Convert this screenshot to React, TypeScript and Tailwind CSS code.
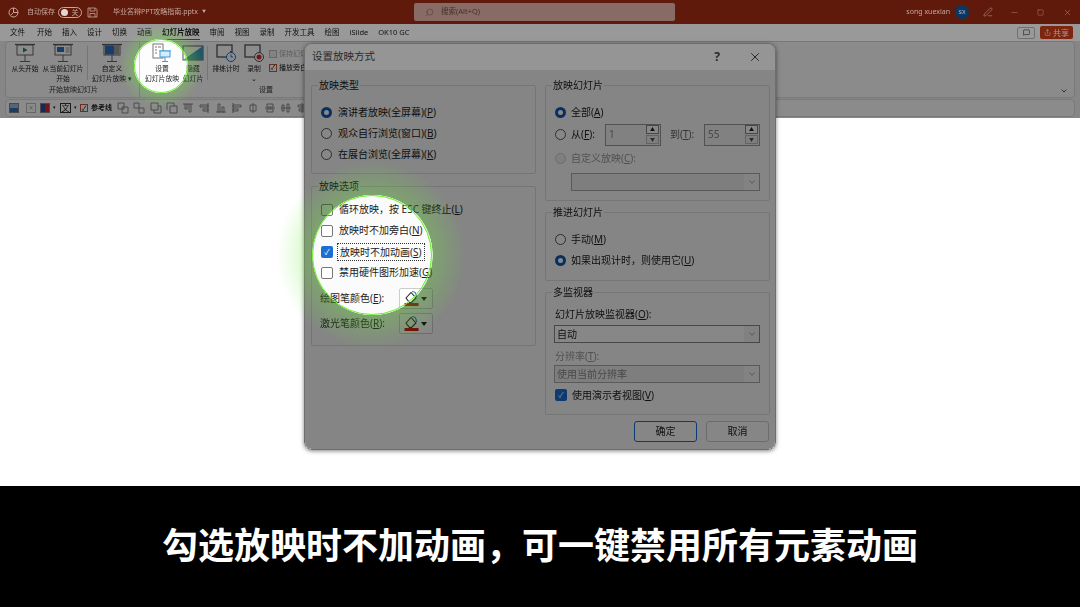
import React from "react";
import { ChevronDown, Minus, Square, X, Search, MessageSquare, Share, PenLine } from "lucide-react";

const Mn = ({ k }: { k: string }) => (
  <>
    (<u>{k}</u>)
  </>
);

const Screen = ({ children }: { children?: React.ReactNode }) => (
  <svg width="22" height="20" viewBox="0 0 22 20" fill="none">
    <path d="M1 1.5h20" stroke="#555" strokeWidth="1.2" />
    <rect x="3" y="2" width="16" height="10" fill="#fff" stroke="#666" />
    {children}
    <path d="M11 12v6M6 18.5h10" stroke="#666" />
  </svg>
);

const RibbonBtn = ({
  className,
  icon,
  lines,
}: {
  className: string;
  icon: React.ReactNode;
  lines: React.ReactNode[];
}) => (
  <div className={`flex flex-col items-center pt-[1px] text-[6.8px] leading-[9.5px] text-[#222] ${className}`}>
    <div className="flex h-[19px] items-center justify-center">{icon}</div>
    <div className="mt-[2px] whitespace-nowrap text-center">
      {lines.map((l, i) => (
        <div key={i}>{l}</div>
      ))}
    </div>
  </div>
);

const tabs = ["开始", "插入", "设计", "切换", "动画"];
const tabsAfter = ["审阅", "视图", "录制", "开发工具", "绘图", "iSlide", "OK10 GC"];

const TitleBar = () => (
  <div className="flex h-[24px] items-center bg-[#5f1a0b] text-[7px] text-[#c7a79d]">
    <div className="flex w-[414px] items-center">
      <svg className="ml-[8px]" width="11" height="11" viewBox="0 0 11 11" fill="none">
        <circle cx="5.5" cy="5.5" r="4.5" stroke="#c7a79d" />
        <path d="M5.5 1v4.5H10M3 8l2.5-2.5" stroke="#c7a79d" />
      </svg>
      <span className="ml-[8px]">自动保存</span>
      <div className="ml-[3px] flex h-[11px] w-[24px] items-center justify-between rounded-full border border-[#c7a79d] px-[1.5px]">
        <span className="h-[7px] w-[7px] rounded-full bg-[#e6d5d0]" />
        <span className="pr-[1px] text-[7px] leading-none">关</span>
      </div>
      <svg className="ml-[5px]" width="11" height="11" viewBox="0 0 11 11" fill="none">
        <path d="M1 1h7.5L10 2.5V10H1zM3 1v3h5V1M3 10V6.5h5V10" stroke="#c7a79d" strokeWidth="0.8" />
      </svg>
      <span className="ml-[15px]">毕业答辩PPT攻略指南.pptx</span>
      <span className="ml-[4px] text-[4px]">▼</span>
    </div>
    <div className="flex h-[18px] w-[261px] items-center rounded-[2px] bg-[#876b64] pl-[11px] text-[#43302a]">
      <Search size={9} className="-scale-x-100" strokeWidth={1.2} />
      <span className="ml-[7px] text-[7.5px]">搜索(Alt+Q)</span>
    </div>
    <div className="flex flex-1 items-center justify-end pr-[8px]">
      <span>song xuexian</span>
      <div className="ml-[5px] flex h-[14px] w-[14px] items-center justify-center rounded-full bg-[#0d3763] text-[6px] text-[#b6c4d3]">
        SX
      </div>
      <PenLine size={10} className="ml-[14px]" strokeWidth={1.2} />
      <Minus size={9} className="ml-[17px]" strokeWidth={1} />
      <Square size={7} className="ml-[18px]" strokeWidth={1.2} />
      <X size={9} className="ml-[19px]" strokeWidth={1.1} />
    </div>
  </div>
);

const TabRow = () => (
  <div className="relative flex h-[17px] items-center bg-white pl-[10px] text-[7.5px] text-[#222]">
    <div className="flex items-center gap-[10px]">
      <span className="mr-[2px]">文件</span>
      {tabs.map((t) => (
        <span key={t}>{t}</span>
      ))}
      <span className="relative font-bold text-[#111]">
        幻灯片放映
        <span className="absolute -bottom-[2px] left-0 right-0 h-[1.5px] bg-[#c43e1c]" />
      </span>
      {tabsAfter.map((t) => (
        <span key={t}>{t}</span>
      ))}
    </div>
    <div className="ml-auto mr-[7px] flex items-center gap-[5px]">
      <div className="flex h-[12px] w-[18px] items-center justify-center rounded-[2px] border border-[#bbb] bg-white">
        <MessageSquare size={7} />
      </div>
      <div className="flex h-[13px] w-[33px] items-center justify-center gap-[2px] rounded-[2px] bg-[#d33f1c] text-[8px] text-white">
        <Share size={7} />
        共享
      </div>
    </div>
    <div className="pointer-events-none absolute inset-0 bg-black/[.40] [mask-image:radial-gradient(circle_at_161px_42px,transparent_27px,black_27.5px)]" />
  </div>
);

const arrangePaths = [
  "M1 1h6v6H1zM5 5h6v6H5z",
  "M1 1h5v5H1zM6 6h5v5H6z",
  "M1 1h7v7H1zM8 4h3v7H4V8",
  "M4 4h7v7H4zM1 8V1h7v3",
  "M1 2h10M3 2v5h2V2M7 2v8h2V2",
  "M10 1v10M2 3h8v2H2zM5 7h5v2H5z",
  "M1 10h10M3 2h2v8H3zM7 5h2v5H7z",
  "M2 1v10M2 3h8v2H2zM2 7h5v2H2z",
  "M6 1v10M3 3h6v6H3z",
  "M1 6h10M3 2h6v3H3zM3 7h6v3H3z",
  "M1 6h10M2 3h2v6H2zM7 2h2v8H7z",
  "M6 1v10M2 3h8v2H2zM3 7h6v2H3z",
];

const Ribbon = () => (
  <div className="relative flex h-[77px] flex-col bg-[#f4f4f4] px-[5px] pb-[1px]">
    <div className="flex h-[57px] rounded-[4px] border border-[#ddd] bg-[#fdfdfd] pl-[2px] pr-[6px]">
      <div className="flex w-[132px] flex-col border-r border-[#cfcfcf]">
        <div className="flex flex-1">
          <RibbonBtn
            className="w-[34px]"
            lines={["从头开始"]}
            icon={
              <Screen>
                <path d="M9 4.5l4.5 2.5L9 9.5z" fill="#1f8a4c" />
              </Screen>
            }
          />
          <RibbonBtn
            className="w-[42px]"
            lines={["从当前幻灯片", "开始"]}
            icon={
              <Screen>
                <rect x="5" y="4" width="7" height="5" fill="#2f6fc0" />
                <path d="M13.5 5h4M13.5 7h4M13.5 9h4" stroke="#777" strokeWidth="0.8" />
              </Screen>
            }
          />
          <div className="mx-[3px] my-[4px] w-px bg-[#d5d5d5]" />
          <RibbonBtn
            className="w-[42px]"
            lines={["自定义", "幻灯片放映 ▾"]}
            icon={
              <Screen>
                <rect x="4" y="2.5" width="9" height="9" fill="#2f6fc0" />
                <rect x="13" y="2.5" width="5" height="9" fill="#9a9a9a" />
              </Screen>
            }
          />
        </div>
        <div className="h-[13px] text-center text-[7px] leading-[11px] text-[#333]">开始放映幻灯片</div>
      </div>
      <div className="flex flex-1 flex-col">
        <div className="flex flex-1">
          <RibbonBtn
            className="ml-[2px] w-[40px]"
            lines={["设置", "幻灯片放映"]}
            icon={
              <svg width="22" height="20" viewBox="0 0 22 20" fill="none">
                <rect x="2" y="1" width="10" height="14" fill="#fff" stroke="#777" />
                <path d="M4 4h2M7 4h3M4 7h2M4 10h2" stroke="#777" />
                <path d="M8 8h12" stroke="#4a9bd6" />
                <rect x="9" y="8" width="10" height="6" fill="#d5ecfa" stroke="#3e9bd8" />
                <path d="M14 14v4M11 18.5h6" stroke="#3e9bd8" />
              </svg>
            }
          />
          <RibbonBtn
            className="w-[22px]"
            lines={["隐藏", "幻灯片"]}
            icon={
              <svg width="22" height="18" viewBox="0 0 22 18" fill="none">
                <rect x="1" y="2" width="20" height="14" fill="#fff" stroke="#555" />
                <path d="M21 2v14H1z" fill="#3e9bb8" />
              </svg>
            }
          />
          <div className="mx-[3px] my-[4px] w-px bg-[#d5d5d5]" />
          <RibbonBtn
            className="w-[30px]"
            lines={["排练计时"]}
            icon={
              <svg width="22" height="20" viewBox="0 0 22 20" fill="none">
                <rect x="2" y="2" width="15" height="12" fill="#fff" stroke="#555" strokeWidth="1.3" />
                <circle cx="16" cy="14" r="4.5" fill="#fff" stroke="#1f6fc0" />
                <path d="M16 11.5V14h2M15 8.5h2" stroke="#1f6fc0" />
              </svg>
            }
          />
          <RibbonBtn
            className="w-[26px]"
            lines={["录制", "⌄"]}
            icon={
              <svg width="22" height="20" viewBox="0 0 22 20" fill="none">
                <rect x="2" y="2" width="15" height="12" fill="#fff" stroke="#555" strokeWidth="1.3" />
                <circle cx="16" cy="14" r="4.5" fill="#fff" stroke="#555" />
                <circle cx="16" cy="14" r="2.5" fill="#d8262c" />
              </svg>
            }
          />
          <div className="ml-[2px] flex w-[35px] flex-col gap-[5px] overflow-hidden whitespace-nowrap pt-[7px] text-[7px] leading-[9px]">
            <div className="flex items-center gap-[2px] text-[#aaa]">
              <span className="h-[8px] w-[8px] shrink-0 border border-[#bbb] bg-[#eee]" />
              保持幻灯
            </div>
            <div className="flex items-center gap-[2px] text-[#222]">
              <span className="flex h-[8px] w-[8px] shrink-0 items-center justify-center border border-[#c4563c] text-[7px] leading-none">✓</span>
              播放旁白
            </div>
          </div>
        </div>
        <div className="h-[13px] w-[252px] text-center text-[7px] leading-[11px] text-[#333]">设置</div>
      </div>
      <div className="ml-auto flex items-end pb-[2px]">
        <ChevronDown size={8} />
      </div>
    </div>
    <div className="mt-[1px] flex h-[18px] items-center rounded-[4px] border border-[#ddd] bg-[#fdfdfd] pl-[3px] text-[7px] text-[#222]">
      <span className="h-[10px] w-[10px] border border-[#888] bg-[linear-gradient(#9db9d8_50%,#2f6fb0_50%)]" />
      <span className="ml-[7px] flex h-[10px] w-[10px] items-center justify-center border border-[#bbb] text-[8px] text-[#aaa]">×</span>
      <span className="ml-[4px] h-[10px] w-[10px] border border-[#888] bg-[linear-gradient(90deg,#1f4f9a_50%,#d8262c_50%)]" />
      <span className="ml-[3px] text-[5px]">▾</span>
      <span className="ml-[4px] flex h-[10px] w-[11px] items-center justify-center border border-[#333] text-[8px] leading-none">文</span>
      <span className="ml-[3px] text-[5px]">▾</span>
      <span className="ml-[3px] flex h-[8px] w-[8px] items-center justify-center border border-[#c4563c] text-[7px] leading-none">✓</span>
      <span className="ml-[3px] font-bold">参考线</span>
      <div className="ml-[5px] flex gap-[4.3px]">
        {arrangePaths.map((d, i) => (
          <svg key={i} width="12" height="12" viewBox="0 0 12 12" fill="none">
            <path d={d} stroke="#888" strokeWidth="1" />
          </svg>
        ))}
      </div>
    </div>
    <div className="pointer-events-none absolute inset-0 bg-black/[.45] [mask-image:radial-gradient(circle_at_161px_25px,transparent_27px,black_27.5px)]" />
  </div>
);

const Radio = ({ on, off }: { on?: boolean; off?: boolean }) =>
  on ? (
    <span className="h-[11px] w-[11px] shrink-0 rounded-full border-[3px] border-[#0a5bb5] bg-white" />
  ) : (
    <span className={`h-[11px] w-[11px] shrink-0 rounded-full border ${off ? "border-[#c8c8c8] bg-[#f0f0f0]" : "border-[#555] bg-white"}`} />
  );

const Check = ({ on }: { on?: boolean }) =>
  on ? (
    <span className="flex h-[12px] w-[12px] shrink-0 items-center justify-center rounded-[2px] bg-[#1a6fd4] text-[8px] leading-none text-white">✓</span>
  ) : (
    <span className="h-[12px] w-[12px] shrink-0 rounded-[2px] border border-[#777] bg-white" />
  );

const ColorBtn = () => (
  <div className="flex h-[21px] w-[34px] items-center justify-between rounded-[2px] border border-[#ccc] bg-white pl-[4px] pr-[5px]">
    <svg width="15" height="17" viewBox="0 0 15 17" fill="none">
      <path d="M2 8l5-5.5 5 5.500-4.500 4.500H5.500z" fill="#fff" stroke="#222" strokeWidth="1.1" />
      <path d="M8 1.500c3 0 4.500 2.500 4.500 5.500" stroke="#1f6fc0" strokeWidth="1.1" />
      <rect x="0.500" y="13" width="14" height="3" fill="#d60000" />
    </svg>
    <span className="h-0 w-0 border-x-[3.5px] border-t-[4px] border-x-transparent border-t-[#111]" />
  </div>
);

const Select = ({ text, dim }: { text?: string; dim?: boolean }) => (
  <div className={`flex h-[18px] items-center border text-[10px] ${dim ? "border-[#aaa] bg-[#eee] text-[#888]" : "border-[#888] bg-[#fff] text-[#222]"}`}>
    <span className="flex-1 pl-[2px]">{text}</span>
    <span className={`flex h-full w-[15px] items-center justify-center ${dim ? "bg-[#f8f8f8]" : "bg-[#f4f4f4]"}`}>
      <ChevronDown size={10} strokeWidth={1.3} color="#555" />
    </span>
  </div>
);

const Spin = ({ value }: { value: string }) => (
  <div className="flex h-[22px] w-[56px] items-center justify-between border border-[#999] bg-[#f4f4f4] text-[#888]">
    <span className="pl-[3px] text-[10px]">{value}</span>
    <span className="mr-[1px] flex flex-col gap-px">
      <span className="flex h-[9px] w-[13px] items-center justify-center border border-[#888] bg-[#fff] text-[5px] leading-none text-[#222]">▲</span>
      <span className="flex h-[9px] w-[13px] items-center justify-center border border-[#bbb] bg-[#eee] text-[5px] leading-none text-[#555]">▼</span>
    </span>
  </div>
);

const Box = ({ title, className, children }: { title: string; className: string; children: React.ReactNode }) => (
  <fieldset className={`rounded-[2px] border border-[#ddd] ${className}`}>
    <legend className="ml-[6px] px-px text-[10px] leading-[14px] text-[#222]">{title}</legend>
    {children}
  </fieldset>
);

const Row = ({ className, children }: { className: string; children: React.ReactNode }) => (
  <div className={`flex h-[21px] items-center ${className}`}>{children}</div>
);

const Dialog = () => (
  <div className="absolute left-[304px] top-[43px] flex h-[407px] w-[472px] flex-col overflow-hidden rounded-[8px] border border-[#6e6e6e] shadow-[0_1px_4px_rgba(0,0,0,0.5)] blur-[0.45px]">
    <div className="flex h-[26px] shrink-0 items-center bg-[#959595] pl-[7px] text-[10.5px] text-[#2a2a2a]">
      <span>设置放映方式</span>
      <span className="ml-auto text-[12px] font-bold">?</span>
      <X size={14} className="ml-[28px] mr-[13px]" strokeWidth={1.6} color="#222" />
    </div>
    <div className="relative flex-1 bg-[#fbfbfb] text-[10px] text-[#222]">
      <div className="flex gap-[9px] pl-[6px] pt-[8px]">
        <div className="flex w-[225px] flex-col gap-[5px]">
          <Box title="放映类型" className="h-[96px]">
            <div className="pl-[9px] pt-[10px]">
              <Row className="gap-[6px]"><Radio on /><span>演讲者放映(全屏幕)<Mn k="P" /></span></Row>
              <Row className="gap-[6px]"><Radio /><span>观众自行浏览(窗口)<Mn k="B" /></span></Row>
              <Row className="gap-[6px]"><Radio /><span>在展台浏览(全屏幕)<Mn k="K" /></span></Row>
            </div>
          </Box>
          <Box title="放映选项" className="h-[167px]">
            <div className="pl-[9px] pt-[6px]">
              <Row className="gap-[6px]"><Check /><span>循环放映{"\uFF0C"}按 ESC 键终止<Mn k="L" /></span></Row>
              <Row className="gap-[6px]"><Check /><span>放映时不加旁白<Mn k="N" /></span></Row>
              <Row className="gap-[4px]">
                <Check on />
                <span className="border border-dotted border-[#333] px-[2px] leading-[16px]">放映时不加动画<Mn k="S" /></span>
              </Row>
              <Row className="gap-[6px]"><Check /><span>禁用硬件图形加速<Mn k="G" /></span></Row>
              <div className="mt-[3px] flex h-[25px] items-center">
                <span className="-ml-[1px] w-[79px]">绘图笔颜色<Mn k="E" />:</span>
                <ColorBtn />
              </div>
              <div className="flex h-[25px] items-center">
                <span className="-ml-[1px] w-[79px]">激光笔颜色<Mn k="R" />:</span>
                <ColorBtn />
              </div>
            </div>
          </Box>
        </div>
        <div className="flex w-[225px] flex-col gap-[4px]">
          <Box title="放映幻灯片" className="h-[123px]">
            <div className="pl-[9px] pt-[10px]">
              <Row className="gap-[5px]"><Radio on /><span>全部<Mn k="A" /></span></Row>
              <Row className="mt-[1px] gap-[5px]">
                <Radio />
                <span className="w-[29px] whitespace-nowrap">从<Mn k="F" />:</span>
                <Spin value="1" />
                <span className="ml-[4px] w-[29px] whitespace-nowrap text-[#666]">到<Mn k="T" />:</span>
                <Spin value="55" />
              </Row>
              <Row className="mt-[3px] gap-[5px] text-[#999]"><Radio off /><span>自定义放映<Mn k="C" />:</span></Row>
              <div className="ml-[16px] mt-[3.5px] w-[189px]"><Select dim /></div>
            </div>
          </Box>
          <Box title="推进幻灯片" className="h-[76px]">
            <div className="pl-[9px] pt-[10px]">
              <Row className="gap-[5px]"><Radio /><span>手动<Mn k="M" /></span></Row>
              <Row className="gap-[5px]"><Radio on /><span>如果出现计时{"\uFF0C"}则使用它<Mn k="U" /></span></Row>
            </div>
          </Box>
          <Box title="多监视器" className="h-[130px]">
            <div className="px-[8px] pt-[8px]">
              <div className="pl-px leading-[14px]">幻灯片放映监视器<Mn k="O" />:</div>
              <div className="mt-[4px] w-[206px]"><Select text="自动" /></div>
              <div className="mt-[6px] pl-px leading-[14px] text-[#999]">分辨率<Mn k="T" />:</div>
              <div className="mt-[2px] w-[206px]"><Select dim text="使用当前分辨率" /></div>
              <div className="mt-[3px] flex h-[18px] items-center gap-[5px] pl-px"><Check on /><span>使用演示者视图<Mn k="V" /></span></div>
            </div>
          </Box>
        </div>
      </div>
      <div className="mt-[6px] flex justify-end gap-[9px] pr-[6px]">
        <div className="flex h-[21px] w-[63px] items-center justify-center rounded-[3px] border-[1.5px] border-[#1a6fd4] bg-[#fdfdfd] text-[10px]">确定</div>
        <div className="flex h-[21px] w-[63px] items-center justify-center rounded-[3px] border border-[#ccc] bg-[#fdfdfd] text-[10px]">取消</div>
      </div>
      <div className="pointer-events-none absolute inset-0 bg-black/[.47] [mask-image:radial-gradient(circle_at_67.5px_185px,transparent_60px,black_60.5px)]" />
    </div>
  </div>
);

export default function App() {
  return (
    <div className="relative flex h-[607px] w-[1080px] flex-col overflow-hidden bg-white font-['Noto_Sans','Noto_Sans_CJK_SC',sans-serif]">
      <div className="blur-[0.45px]">
        <TitleBar />
        <TabRow />
        <Ribbon />
      </div>
      <div className="flex-1 bg-white" />
      <div className="flex h-[121px] items-center justify-center bg-black pb-[2px] text-[36px] font-bold leading-none text-white">
        勾选放映时不加动画{"\uFF0C"}可一键禁用所有元素动画
      </div>
      <Dialog />
      {/* spotlights */}
      <div className="pointer-events-none absolute left-[119px] top-[24px] h-[84px] w-[84px] rounded-full bg-[radial-gradient(circle_closest-side,transparent_63%,rgba(110,235,60,0.3)_64%,rgba(110,235,60,0)_100%)]" />
      <div className="pointer-events-none absolute left-[134px] top-[39px] h-[54px] w-[54px] rounded-full border-[1.5px] border-[#6cf030]" />
      <div className="pointer-events-none absolute left-[277px] top-[160px] h-[190px] w-[190px] rounded-full bg-[radial-gradient(circle_closest-side,transparent_62%,rgba(110,235,60,0.3)_63%,rgba(110,235,60,0)_100%)]" />
      <div className="pointer-events-none absolute left-[312px] top-[195px] h-[120px] w-[120px] rounded-full border-[1.5px] border-[#6cf030]" />
    </div>
  );
}
